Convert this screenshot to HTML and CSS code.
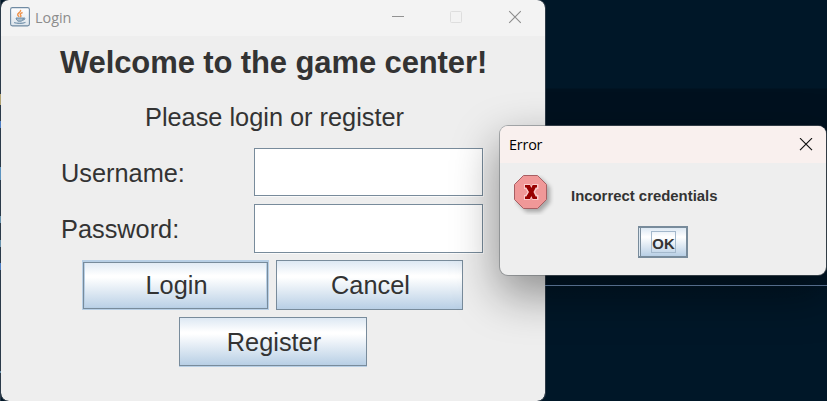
FILE: index.html
```html
<!DOCTYPE html>
<html lang="en">
<head>
<meta charset="utf-8">
<title>Login</title>
<link rel="stylesheet" href="styles.css">
</head>
<body>
<div class="desktop">
  <div class="edge"></div>
  <div class="rule"></div>
  <main class="window login">
    <header class="titlebar">
      <svg class="java" width="20" height="20" viewBox="0 0 20 20">
        <defs><linearGradient id="g" x1="0" y1="0" x2="0" y2="1"><stop offset="0" stop-color="#fff"/><stop offset="1" stop-color="#dce4eb"/></linearGradient></defs>
        <rect x=".6" y=".6" width="18.8" height="18.3" rx="1.8" fill="url(#g)" stroke="#708ba3" stroke-width="1.1"/>
        <path d="M10.400 3c1.400 2-3.600 3-2.700 5 .3.800 1 1.200 1.500 1.800M12.600 5.500c-3 1-2.600 2-1.700 3.100.3.700-.1 1-.7 1.500" fill="none" stroke="#ef9148" stroke-width="1.400"/>
        <path d="M6 11h7.500c-.2 1.500-1 2.500-2 3.200H8C7 13.500 6.200 12.500 6 11zM13.500 11c2.500-.4 1.800 2-1 2.200M4 15.600c3 1.200 8.500 1.200 11.500-.2" fill="#a9bccb" stroke="#6688a4" stroke-width=".9"/>
      </svg>
      <span class="caption">Login</span>
      <svg class="controls" width="132" height="16" viewBox="0 0 132 16" fill="none">
        <path d="M0 7.500h12" stroke="#929292"/>
        <rect x="58.500" y="2.500" width="11" height="11" rx="1" stroke="#dedede"/>
        <path d="M117.200 2.200l11.600 11.600M128.800 2.200l-11.600 11.600" stroke="#8c8c8c" stroke-width="1.100"/>
      </svg>
    </header>
    <section class="content">
      <h1>Welcome to the game center!</h1>
      <p class="prompt">Please login or register</p>
      <form class="form">
        <label for="user">Username:</label><input class="field" id="user" type="text">
        <label for="pass">Password:</label><input class="field tall" id="pass" type="password">
      </form>
      <div class="actions">
        <button class="button primary">Login</button>
        <button class="button">Cancel</button>
      </div>
      <button class="button register">Register</button>
    </section>
  </main>
  <section class="window dialog">
    <header class="dialog-title">
      <span class="caption">Error</span>
      <svg width="14" height="14" viewBox="0 0 14 14"><path d="M1 .2l12 12M13 .2l-12 12" stroke="#111" stroke-width="1.200"/></svg>
    </header>
    <div class="message">
      <svg class="error-icon" width="40" height="40" viewBox="0 0 40 40">
        <path class="octagon" d="M9.500 .5h14l9 9v15l-9 9h-14l-9-9v-15z" fill="#f09898" stroke="#a75f63"/>
        <path d="M10 9h6l1.200 2 1.200-2h6v5H23l-2 3 2 3h1.500v5h-6l-1.300-2-1.200 2h-6v-5h1.500l2-3-2-3H10z" fill="#f9caca"/>
        <path d="M11 10h5l1.300 3 1.400-3H23v2.500h-1.300L19.500 17l2.200 4.500H23V24h-4.300l-1.400-3-1.300 3h-5v-2.500h1.300L15 17l-2.700-4.500H11z" fill="#980000"/>
      </svg>
      <span>Incorrect credentials</span>
    </div>
    <button class="ok"><span>OK</span></button>
  </section>
</div>
</body>
</html>
```
FILE: styles.css
```css
* { box-sizing: border-box; }
body { margin: 0; font-family: "Liberation Sans", Arial, sans-serif; color: #333; }
.desktop { position: relative; width: 827px; height: 401px; overflow: hidden; background: linear-gradient(#001728 0 88px, #00111f 89px 120px, #001728 300px); }
.edge { position: absolute; z-index: 1; left: 0; top: 0; width: 1px; height: 401px; background: linear-gradient(transparent 94px, #b2a373 94px 105px, transparent 105px 121px, #4c7dc4 121px 128px, transparent 128px 167px, #5c93bf 167px 180px, transparent 180px 216px, #6792ad 216px 223px, transparent 223px 240px, #6792ad 240px 247px, transparent 247px 263px, #4c7dc4 263px 270px, transparent 270px 371px, #6792ad 371px 373px, transparent 373px), #2b3a49; }
.rule { position: absolute; left: 545px; top: 285px; width: 282px; height: 1px; z-index: 1; background: #536b89; }
.window { position: absolute; background: #eee; overflow: hidden; }
.login { left: 1px; top: 0; width: 544px; height: 401px; border-radius: 8px; outline: 1px solid #2d3945; }
.titlebar { height: 36px; background: #f3f3f3; display: flex; align-items: center; padding: 0 21px 2px 9px; }
.caption { font-family: "Open Sans", "Noto Sans", sans-serif; font-size: 14.4px; line-height: 20px; letter-spacing: -.2px; }
.titlebar .caption { color: #8c8c8c; margin-left: 5px; padding-top: 1px; letter-spacing: 0; }
.controls { margin-left: auto; }
.content { display: flex; flex-direction: column; align-items: flex-start; }
h1 { margin: 8px 0 0 59px; font-size: 31px; line-height: 38px; letter-spacing: -.11px; white-space: nowrap; }
.prompt { margin: 20px 0 0 144px; font-size: 25.330px; line-height: 31px; white-space: nowrap; }
.form { margin: 15px 0 0 60px; display: grid; grid-template-columns: 193px 230px; grid-auto-rows: 49px; row-gap: 7px; font-size: 25.330px; align-items: center; }
.form label { padding-top: 2px; }
.field { width: 229px; height: 48px; padding: 0 6px; align-self: start; background: #fff; border: 1px solid #788b9b; border-radius: 0; box-shadow: 1px 1px #fafafa; font: inherit; outline: none; }
.tall { height: 49px; }
.actions { display: flex; gap: 7px; margin: 7px 0 0 81px; }
.button { width: 187px; height: 50px; padding: 1px 0 0 2px; border: 1px solid #788b9b; background: linear-gradient(#dde8f3, #fff 30%, #fff 34%, #b8cfe5); color: #333; font: 25.330px/47px "Liberation Sans", sans-serif; }
.primary { border-color: #b8cfe5; box-shadow: inset 0 1px #b8cfe5, inset 0 0 0 1px #788b9b, inset 0 2px #788b9b, inset 0 0 0 2px #b8cfe5; }
.register { width: 188px; height: 49px; margin: 7px 0 0 178px; box-shadow: 0 1px #b8cfe5; }
.dialog { left: 500px; top: 126px; width: 326px; height: 149px; border-radius: 8px; box-shadow: 0 0 0 1px rgba(100,105,110,.5), 0 18px 46px 2px rgba(0,0,0,.4); }
.dialog-title { height: 37px; background: #f9f0ee; display: flex; align-items: center; justify-content: space-between; padding: 0 13px 0 9px; color: #000; }
.message { display: flex; height: 63px; padding: 12px 0 0 14px; font-size: 14.900px; font-weight: bold; line-height: 17px; }
.message span { margin: 13px 0 0 17px; }
.octagon { filter: drop-shadow(3px 3px 2px rgba(0,0,0,.3)); }
.ok { display: grid; place-items: center; width: 50px; height: 32px; margin-left: 138px; padding: 0; border: 2px solid #788b9b; border-left-width: 1px; box-shadow: inset 1px 0 #dce7f1, inset 2px 0 #788b9b; background: linear-gradient(#dde8f3, #fff 32%, #b8cfe5); font: bold 14.900px/20px "Liberation Sans", sans-serif; color: #333; }
.ok span { width: 25px; height: 22px; margin-left: 2px; border: 1px solid #a3b8cc; padding-top: 2px; text-align: center; }
```
